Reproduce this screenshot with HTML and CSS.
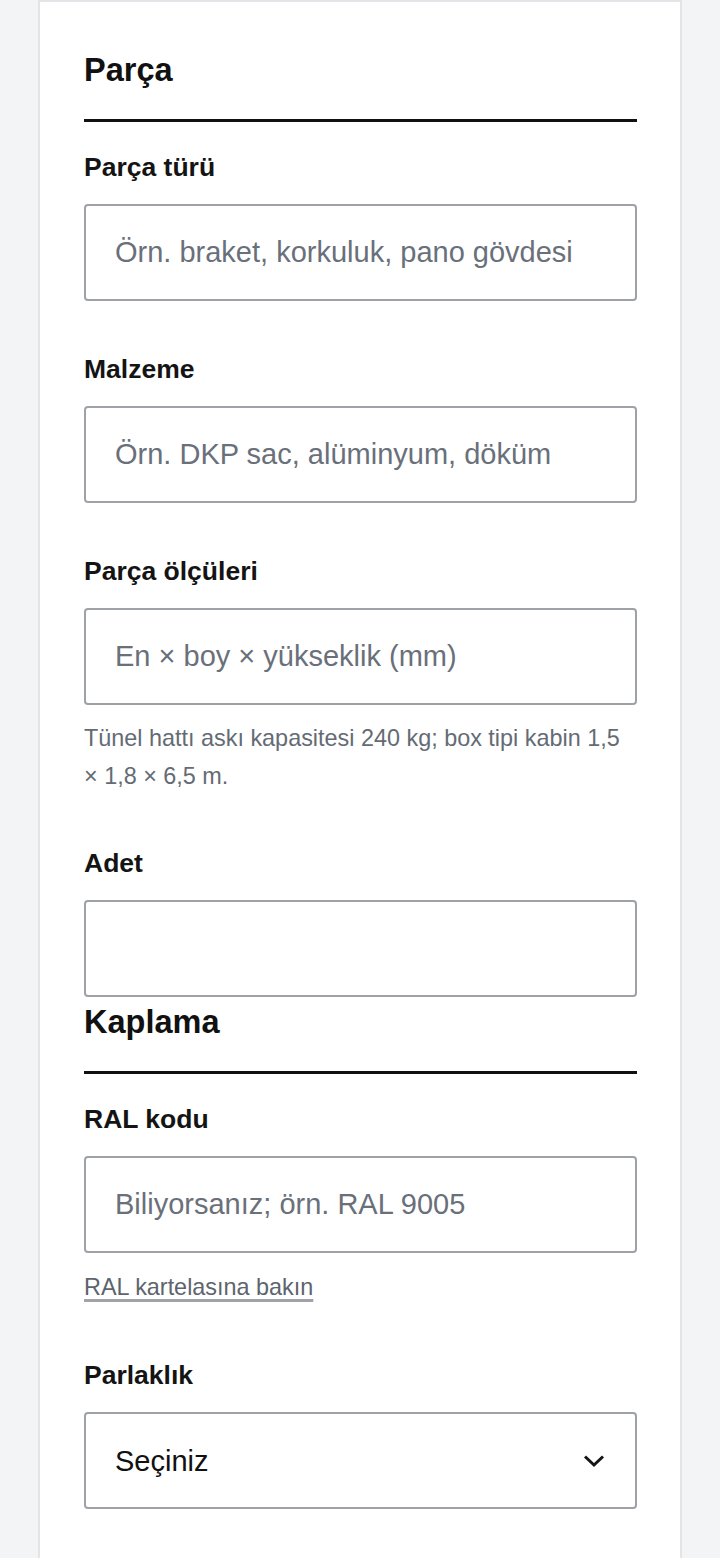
FILE: index.html
```html
<!DOCTYPE html>
<html lang="tr">
<head>
<meta charset="utf-8">
<meta name="viewport" content="width=device-width, initial-scale=1">
<title>Parça ve Kaplama</title>
<link rel="stylesheet" href="styles.css">
</head>
<body>
<main class="card">
  <section class="group">
    <h2 class="group-title">Parça</h2>
    <div class="field">
      <label class="field-label" for="part-type">Parça türü</label>
      <input class="field-input" id="part-type" type="text" placeholder="Örn. braket, korkuluk, pano gövdesi">
    </div>
    <div class="field">
      <label class="field-label" for="material">Malzeme</label>
      <input class="field-input" id="material" type="text" placeholder="Örn. DKP sac, alüminyum, döküm">
    </div>
    <div class="field">
      <label class="field-label" for="dims">Parça ölçüleri</label>
      <input class="field-input" id="dims" type="text" placeholder="En × boy × yükseklik (mm)">
      <p class="field-help">Tünel hattı askı kapasitesi 240 kg; box tipi kabin 1,5 × 1,8 × 6,5 m.</p>
    </div>
    <div class="field">
      <label class="field-label" for="qty">Adet</label>
      <input class="field-input" id="qty" type="text">
    </div>
  </section>
  <section class="group">
    <h2 class="group-title">Kaplama</h2>
    <div class="field">
      <label class="field-label" for="ral">RAL kodu</label>
      <input class="field-input" id="ral" type="text" placeholder="Biliyorsanız; örn. RAL 9005">
      <p class="field-extra"><a class="field-link" href="#ral">RAL kartelasına bakın</a></p>
    </div>
    <div class="field">
      <label class="field-label" for="gloss">Parlaklık</label>
      <div class="select-wrap">
        <select class="field-input field-select" id="gloss">
          <option>Seçiniz</option>
          <option>Mat</option>
          <option>İpek mat</option>
          <option>Parlak</option>
        </select>
        <svg class="select-chevron" width="22" height="14" viewBox="0 0 22 14" aria-hidden="true">
          <polyline points="2,2.5 11,11 20,2.5" fill="none" stroke="#151515" stroke-width="3"/>
        </svg>
      </div>
    </div>
  </section>
</main>
</body>
</html>
```

FILE: styles.css
```css
* {
  box-sizing: border-box;
}

html, body {
  margin: 0;
  padding: 0;
}

body {
  background: #f3f4f6;
  font-family: "Liberation Sans", Arial, sans-serif;
  color: #141414;
}

.card {
  width: 644px;
  margin: 0 auto;
  min-height: 1558px;
  background: #ffffff;
  border: 2px solid #e3e4e7;
  border-bottom: none;
  padding: 47px 43px 60px 44px;
}

.group + .group {
  margin-top: 4px;
}

.group-title {
  margin: 0;
  font-size: 32.5px;
  line-height: 42px;
  font-weight: 700;
  color: #111111;
  padding-bottom: 28px;
  border-bottom: 3px solid #111111;
}

.field {
  margin-top: 50px;
}

.group-title + .field {
  margin-top: 27px;
}

.field-label {
  display: block;
  font-size: 26.5px;
  line-height: 36px;
  font-weight: 700;
  color: #141414;
  margin-bottom: 19px;
}

.field-input {
  display: block;
  width: 100%;
  height: 97px;
  margin: 0;
  padding: 0 29px;
  border: 2px solid #9ea1a6;
  border-radius: 4px;
  background: #ffffff;
  font-family: "Liberation Sans", Arial, sans-serif;
  font-size: 29px;
  color: #141414;
  outline: none;
}

.field-input::placeholder {
  color: #69707a;
  opacity: 1;
}

.field-help {
  margin: 14px 0 0;
  font-size: 23.4px;
  line-height: 38px;
  color: #646b74;
}

.field-extra {
  margin: 15px 0 0;
  font-size: 23.4px;
  line-height: 39px;
}

.field-link {
  color: #5d646d;
  text-decoration: underline;
  text-decoration-color: #a0a4aa;
  text-decoration-thickness: 3px;
  text-underline-offset: 4px;
}

.select-wrap {
  position: relative;
}

.field-select {
  appearance: none;
  -webkit-appearance: none;
  color: #111111;
  cursor: pointer;
}

.select-chevron {
  position: absolute;
  right: 32px;
  top: 50%;
  transform: translateY(-50%);
  pointer-events: none;
}
```
